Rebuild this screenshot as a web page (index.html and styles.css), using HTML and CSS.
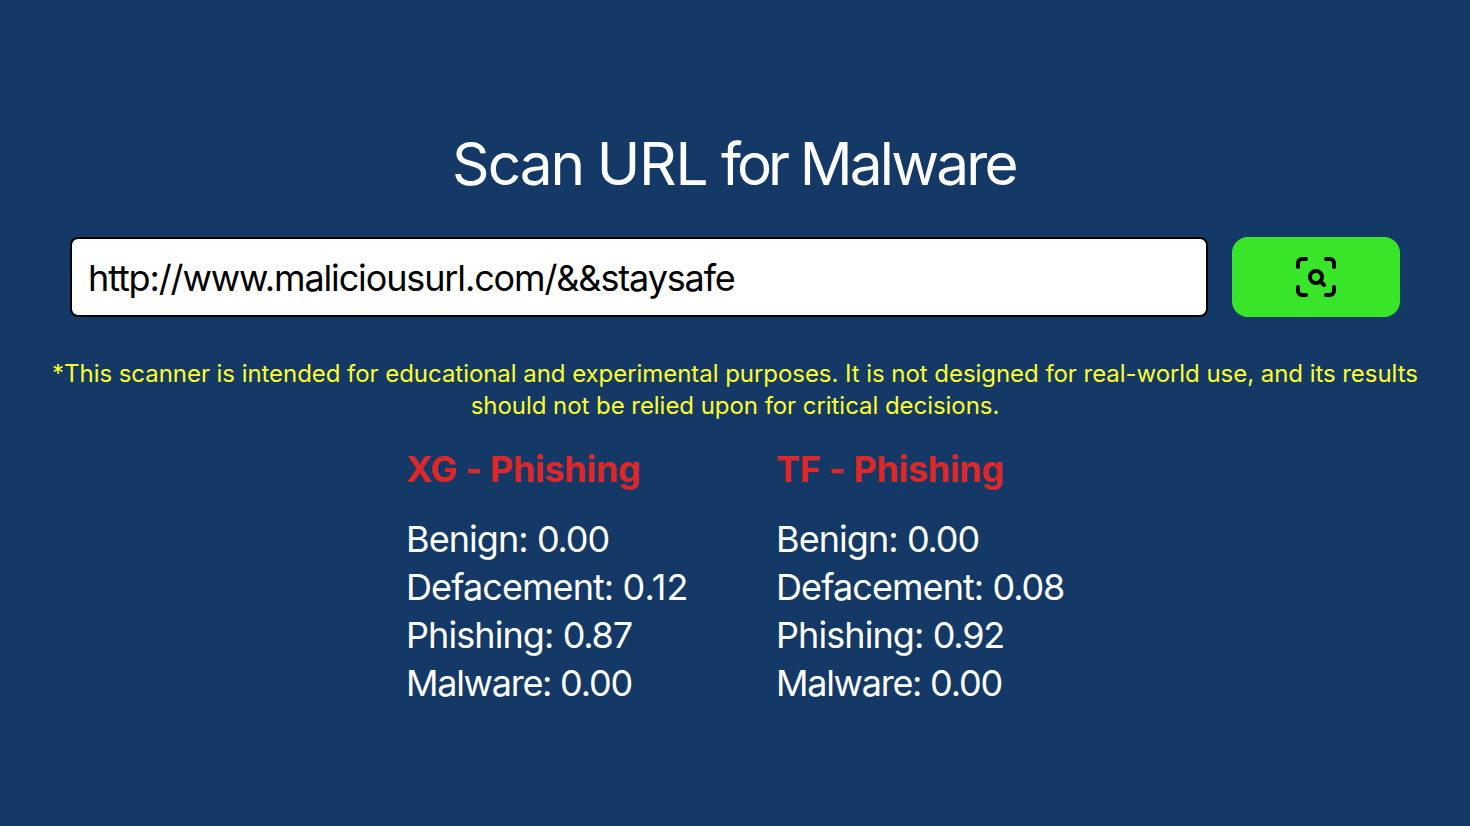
FILE: index.html
```html
<!DOCTYPE html>
<html lang="en">
<head>
<meta charset="utf-8">
<title>Scan URL for Malware</title>
<link rel="stylesheet" href="styles.css">
</head>
<body>
<main class="page">
  <h1 class="title"><span class="title-lead">Scan</span> <span class="title-caps">URL</span> <span class="title-mid">for</span> Malware</h1>
  <form class="search">
    <input class="url" type="text" value="http://www.maliciousurl.com/&amp;&amp;staysafe" aria-label="URL">
    <button class="scan" type="button" aria-label="Scan">
      <svg width="48" height="48" viewBox="0 0 24 24" fill="none" stroke="#000" stroke-width="2" stroke-linecap="round" stroke-linejoin="round"><path d="M3 7V5a2 2 0 0 1 2-2h2"/><path d="M17 3h2a2 2 0 0 1 2 2v2"/><path d="M21 17v2a2 2 0 0 1-2 2h-2"/><path d="M7 21H5a2 2 0 0 1-2-2v-2"/><circle cx="12" cy="12" r="3"/><path d="m16 16-1.9-1.9"/></svg>
    </button>
  </form>
  <p class="note">*This scanner is intended for educational and experimental purposes. It is not designed for real-world use, and its results<br>should not be relied upon for critical decisions.</p>
  <section class="results">
    <div class="result">
      <h2 class="verdict">XG - Phishing</h2>
      <p class="score">Benign: <span class="value">0.00</span></p>
      <p class="score">Defacement: <span class="value loose">0.12</span></p>
      <p class="score">Phishing: <span class="value">0.87</span></p>
      <p class="score tight">Malware: <span class="value">0.00</span></p>
    </div>
    <div class="result">
      <h2 class="verdict">TF - Phishing</h2>
      <p class="score">Benign: <span class="value">0.00</span></p>
      <p class="score">Defacement: <span class="value">0.08</span></p>
      <p class="score">Phishing: <span class="value">0.92</span></p>
      <p class="score tight">Malware: <span class="value">0.00</span></p>
    </div>
  </section>
</main>
</body>
</html>
```
FILE: styles.css
```css
* { box-sizing: border-box; }
body { margin: 0; background: #143966; color: #fff; font-family: Inter, "Liberation Sans", sans-serif; }
.page { height: 826px; padding-top: 125px; overflow: hidden; }
.title { margin: 0; height: 80px; line-height: 77px; font-size: 58.5px; font-weight: 400; letter-spacing: -2.8px; text-align: center; text-indent: -2px; white-space: nowrap; }
.title-lead { letter-spacing: -2px; }
.title-caps { letter-spacing: -1.2px; }
.title-mid { letter-spacing: -4px; }
.search { display: flex; gap: 24px; margin: 32px 70px 0; height: 80px; }
.url { flex: 1; min-width: 0; padding: 1px 16px 0; border: 2px solid #000; border-radius: 8px; background: #fff; color: #000; font: 400 36px Inter, "Liberation Sans", sans-serif; letter-spacing: -1.13px; }
.scan { display: flex; align-items: center; justify-content: center; width: 168px; padding: 0; border: 0; border-radius: 16px; background: #39e529; }
.note { margin: 41px 0 0; color: #ffff2e; font-size: 24px; line-height: 32px; letter-spacing: -0.05px; text-align: center; white-space: nowrap; }
.results { display: grid; grid-template-columns: 281px 288px; gap: 89px; justify-content: center; margin-top: 23px; white-space: nowrap; }
.verdict { margin: 0 0 22px; font-size: 36px; line-height: 48px; font-weight: 700; color: #dc2828; letter-spacing: -0.32px; }
.score { margin: 0; font-size: 36px; line-height: 48px; letter-spacing: -0.92px; }
.tight { letter-spacing: -1.28px; }
.value { letter-spacing: -1.2px; }
.loose { letter-spacing: 0.1px; }
```
